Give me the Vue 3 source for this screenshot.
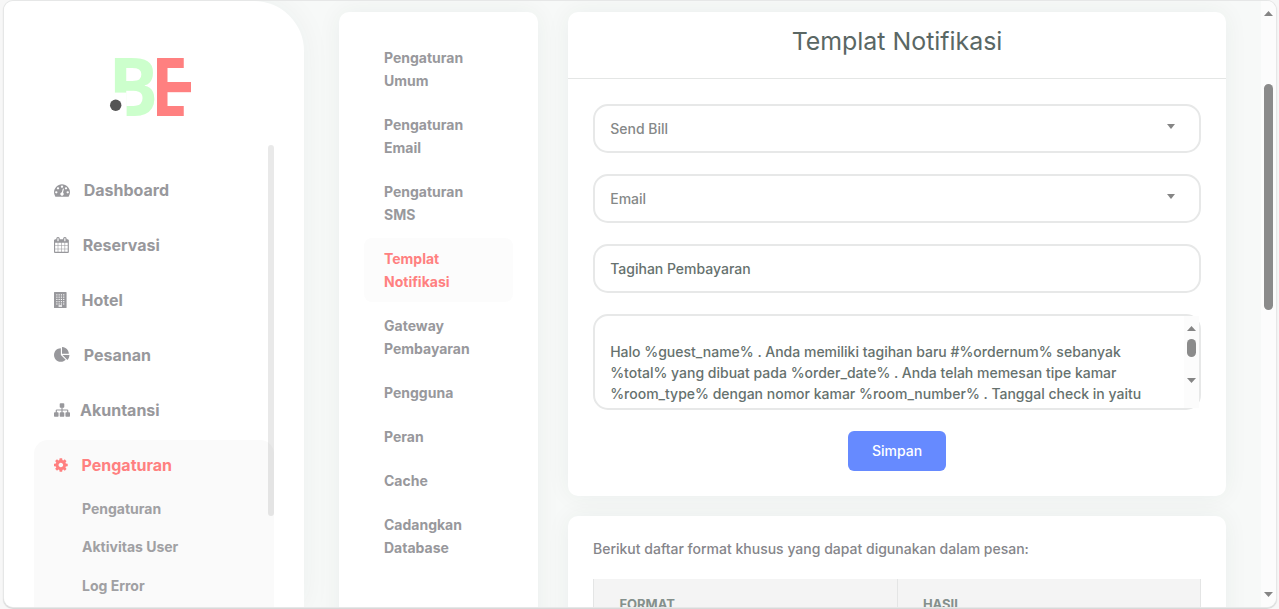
<script setup>
const building = []
for (let r = 0; r < 5; r++) {
  for (let c = 0; c < 4; c++) {
    building.push({ x: 256 + c * 256, y: 256 + r * 256 })
  }
}

const paths = {
  tachometer:
    'M384 1152q0-53-37.5-90.5t-90.5-37.5-90.5 37.5-37.5 90.5 37.5 90.5 90.5 37.5 90.5-37.5 37.5-90.5zm192-448q0-53-37.5-90.5t-90.5-37.5-90.5 37.5-37.5 90.5 37.5 90.5 90.5 37.5 90.5-37.5 37.5-90.5zm428 481l101-382q6-26-7.5-48.5t-38.5-29.5-48 6.5-30 39.5l-101 382q-60 5-107 43.5t-63 98.5q-20 77 20 146t117 89 146-20 89-117q16-60-6-117t-72-91zm660-33q0-53-37.5-90.5t-90.5-37.5-90.5 37.5-37.5 90.5 37.5 90.5 90.5 37.5 90.5-37.5 37.5-90.5zm-640-640q0-53-37.5-90.5t-90.5-37.5-90.5 37.5-37.5 90.5 37.5 90.5 90.5 37.5 90.5-37.5 37.5-90.5zm448 192q0-53-37.5-90.5t-90.5-37.5-90.5 37.5-37.5 90.5 37.5 90.5 90.5 37.5 90.5-37.5 37.5-90.5zm320 448q0 261-141 483-19 29-54 29h-1402q-35 0-54-29-141-221-141-483 0-182 71-348t191-286 286-191 348-71 348 71 286 191 191 286 71 348z',
  calendar:
    'M128 1664h288v-288h-288v288zm352 0h320v-288h-320v288zm-352-352h288v-320h-288v320zm352 0h320v-320h-320v320zm-352-384h288v-288h-288v288zm736 736h320v-288h-320v288zm-384-736h320v-288h-320v288zm768 736h288v-288h-288v288zm-384-352h320v-320h-320v320zm-352-864v-288q0-13-9.500-22.500t-22.500-9.500h-64q-13 0-22.500 9.500t-9.500 22.500v288q0 13 9.500 22.500t22.500 9.500h64q13 0 22.500-9.500t9.500-22.500zm736 864h288v-320h-288v320zm-384-384h320v-288h-320v288zm384 0h288v-288h-288v288zm32-480v-288q0-13-9.500-22.500t-22.500-9.500h-64q-13 0-22.500 9.500t-9.500 22.500v288q0 13 9.500 22.500t22.500 9.500h64q13 0 22.500-9.500t9.500-22.500zm384-64v1280q0 52-38 90t-90 38h-1408q-52 0-90-38t-38-90v-1280q0-52 38-90t90-38h128v-96q0-66 47-113t113-47h64q66 0 113 47t47 113v96h384v-96q0-66 47-113t113-47h64q66 0 113 47t47 113v96h128q52 0 90 38t38 90z',
  pie:
    'M768 890l546 546q-106 108-247.500 168t-298.500 60q-209 0-385.500-103t-279.500-279.500-103-385.500 103-385.500 279.500-279.500 385.500-103v762zm187 6h773q0 157-60 298.500t-168 247.500zm709-128h-768v-768q209 0 385.500 103t279.500 279.500 103 385.500z',
  sitemap:
    'M1792 1248v320q0 40-28 68t-68 28h-320q-40 0-68-28t-28-68v-320q0-40 28-68t68-28h96v-192h-512v192h96q40 0 68 28t28 68v320q0 40-28 68t-68 28h-320q-40 0-68-28t-28-68v-320q0-40 28-68t68-28h96v-192h-512v192h96q40 0 68 28t28 68v320q0 40-28 68t-68 28h-320q-40 0-68-28t-28-68v-320q0-40 28-68t68-28h96v-192q0-52 38-90t90-38h512v-192h-96q-40 0-68-28t-28-68v-320q0-40 28-68t68-28h320q40 0 68 28t28 68v320q0 40-28 68t-68 28h-96v192h512q52 0 90 38t38 90v192h96q40 0 68 28t28 68z',
  cog:
    'M1024 896q0-106-75-181t-181-75-181 75-75 181 75 181 181 75 181-75 75-181zm512-109v222q0 12-8 23t-20 13l-185 28q-19 54-39 91 35 50 107 138 10 12 10 25t-9 23q-27 37-99 108t-94 71q-12 0-26-9l-138-108q-44 23-91 38-16 136-29 186-7 28-36 28h-222q-14 0-24.500-8.500t-11.500-21.500l-28-184q-49-16-90-37l-141 107q-10 9-25 9-14 0-25-11-126-114-165-168-7-10-7-23 0-12 8-23 15-21 51-66.500t54-70.500q-27-50-41-99l-183-27q-13-2-21-12.500t-8-23.500v-222q0-12 8-23t19-13l186-28q14-46 39-92-40-57-107-138-10-12-10-24 0-10 9-23 26-36 98.500-107.500t94.500-71.500q13 0 26 10l138 107q44-23 91-38 16-136 29-186 7-28 36-28h222q14 0 24.500 8.500t11.500 21.500l28 184q49 16 90 37l142-107q9-9 24-9 13 0 25 10 129 119 165 170 7 8 7 22 0 12-8 23-15 21-51 66.500t-54 70.500q26 50 41 98l183 28q13 2 21 12.500t8 23.500z',
}

const menu = [
  { label: 'Dashboard', icon: 'tachometer' },
  { label: 'Reservasi', icon: 'calendar' },
  { label: 'Hotel', icon: 'building' },
  { label: 'Pesanan', icon: 'pie' },
  { label: 'Akuntansi', icon: 'sitemap' },
]
const submenu = ['Pengaturan', 'Aktivitas User', 'Log Error']
const tabs = [
  ['Pengaturan', 'Umum'],
  ['Pengaturan', 'Email'],
  ['Pengaturan', 'SMS'],
  ['Templat', 'Notifikasi'],
  ['Gateway', 'Pembayaran'],
  ['Pengguna'],
  ['Peran'],
  ['Cache'],
  ['Cadangkan', 'Database'],
]
const message = [
  'Halo %guest_name% . Anda memiliki tagihan baru #%ordernum% sebanyak',
  '%total% yang dibuat pada %order_date% . Anda telah memesan tipe kamar',
  '%room_type% dengan nomor kamar %room_number% . Tanggal check in yaitu',
]
</script>

<template>
  <div class="desk">
    <div class="window">
      <aside class="sidebar">
        <svg class="logo" width="90" height="70" viewBox="0 0 90 70">
          <text class="glyph green" transform="translate(2.300 62) scale(.93 1)">B</text>
          <rect x="8" y="38.600" width="12.600" height="26" fill="#fff" />
          <text class="glyph red" transform="translate(45.300 62) scale(.81 1)">E</text>
          <rect x="61" y="15.300" width="20" height="36" fill="#fff" />
          <rect x="51" y="5.100" width="10.500" height="56.900" fill="#ff8080" />
          <rect x="61" y="28" width="24" height="10.200" fill="#ff8080" />
          <circle cx="9.700" cy="51.300" r="5.700" fill="#555" />
        </svg>
        <div class="side-body">
          <nav class="menu">
            <a v-for="m in menu" :key="m.label" class="item" :class="m.icon">
              <svg class="ico" viewBox="0 0 1792 1792">
                <template v-if="m.icon === 'building'">
                  <path fill-rule="evenodd" d="M64 0H1344q64 0 64 64V1728q0 64-64 64H64q-64 0-64-64V64Q0 0 64 0zM512 1472V1664H896V1472z" />
                  <rect v-for="(b, i) in building" :key="i" :x="b.x" :y="b.y" width="128" height="128" fill="#fff" />
                </template>
                <path v-else :d="paths[m.icon]" />
              </svg>
              <span>{{ m.label }}</span>
            </a>
            <div class="group">
              <a class="item cog on">
                <svg class="ico" viewBox="0 0 1792 1792"><path :d="paths.cog" /></svg>
                <span>Pengaturan</span>
              </a>
              <a v-for="s in submenu" :key="s" class="sub">{{ s }}</a>
            </div>
          </nav>
          <i class="thin-bar"></i>
        </div>
      </aside>

      <main class="content">
        <section class="card tabs">
          <a v-for="(t, i) in tabs" :key="i" class="tab" :class="{ on: i === 3 }">
            <span v-for="w in t" :key="w">{{ w }}</span>
          </a>
        </section>

        <div class="column">
          <section class="card form">
            <h1>Templat Notifikasi</h1>
            <div class="fields">
              <div class="field select">
                <span>Send Bill</span>
                <svg width="8" height="5" viewBox="0 0 8 5"><path d="M0 0H8L4 5z" /></svg>
              </div>
              <div class="field select">
                <span>Email</span>
                <svg width="8" height="5" viewBox="0 0 8 5"><path d="M0 0H8L4 5z" /></svg>
              </div>
              <div class="field"><span>Tagihan Pembayaran</span></div>
              <div class="area">
                <div class="text"><p v-for="l in message" :key="l">{{ l }}</p></div>
                <div class="area-bar">
                  <svg width="9" height="5" viewBox="0 0 9 5"><path d="M4.500 0L9 5H0z" /></svg>
                  <i></i>
                  <svg width="9" height="5" viewBox="0 0 9 5"><path d="M0 0H9L4.500 5z" /></svg>
                </div>
              </div>
              <button>Simpan</button>
            </div>
          </section>
          <section class="card formats">
            <p>Berikut daftar format khusus yang dapat digunakan dalam pesan:</p>
            <div class="table"><b>FORMAT</b><b>HASIL</b></div>
          </section>
        </div>
      </main>

      <div class="page-bar">
        <svg width="9" height="5" viewBox="0 0 9 5"><path d="M4.500 0L9 5H0z" /></svg>
        <i></i>
        <svg width="9" height="5" viewBox="0 0 9 5"><path d="M0 0H9L4.500 5z" /></svg>
      </div>
    </div>
  </div>
</template>

<style>
body { margin: 0; overflow: hidden; }
</style>

<style scoped>
* { box-sizing: border-box; }
.desk {
  height: 609px;
  padding: 1px 3px 2px 4px;
  background: #f7f7f7;
  font-family: Inter, "Liberation Sans", sans-serif;
  font-size: 14px;
  overflow: hidden;
}
.window {
  display: flex;
  width: 1272px;
  height: 606px;
  border-radius: 9px;
  overflow: hidden;
  background: #f7f9f8;
  box-shadow: 0 0 0 1px #e6e7e7, 0 1px 1px 1px #d4d5d5;
}
.sidebar {
  flex: none;
  width: 300px;
  padding: 53px 30px 0;
  background: #fff;
  border-radius: 0 50px 0 0;
  box-shadow: 0 0 30px rgba(40, 60, 50, .05);
}
.logo { display: block; margin-left: 72px; overflow: visible; }
.glyph { font: 700 80px "Open Sans", sans-serif; }
.green { fill: #ccffcc; }
.red { fill: #ff8080; }
.side-body { display: flex; margin-top: 21px; }
.menu { flex: none; width: 240px; padding-top: 20px; }
.item {
  display: flex;
  align-items: center;
  height: 50px;
  margin-bottom: 5px;
  padding-left: 20px;
  color: #98989c;
  font-size: 16px;
  font-weight: 650;
}
.ico { flex: none; width: 16px; height: 16px; fill: currentColor; overflow: visible; }
.tachometer span, .pie span { margin-left: 13.700px; }
.calendar span { margin-left: 12.700px; }
.building span { margin-left: 11.500px; }
.sitemap span { margin-left: 10px; }
.cog span { margin-left: 11.500px; }
.on { color: #ff8080; }
.group { height: 200px; border-radius: 14px; background: #fafafa; }
.group .item { margin-bottom: 0; }
.sub {
  display: block;
  height: 38.300px;
  padding-left: 48px;
  line-height: 38px;
  color: #a0a0a3;
  font-weight: 650;
}
.thin-bar {
  flex: none;
  width: 6px;
  height: 371px;
  margin-left: -6px;
  border-radius: 3px;
  background: rgba(0, 0, 0, .085);
}
.content { display: flex; flex: 1; gap: 30px; padding: 11px 35px 0; min-width: 0; }
.card {
  background: #fff;
  border-radius: 10px;
  box-shadow: 0 0 25px rgba(40, 60, 50, .06);
}
.tabs { flex: none; width: 199px; height: 640px; padding: 25px 25px 0; }
.tab {
  display: block;
  margin-bottom: 3px;
  padding: 9px 20px;
  border-radius: 8px;
  color: #98989c;
  font-weight: 650;
  line-height: 23px;
}
.tab span { display: block; }
.tab.on { color: #ff8080; background: #fcfcfc; }
.column { flex: none; width: 658px; }
.form { height: 484px; margin-bottom: 20px; }
h1 {
  height: 67px;
  margin: 0;
  border-bottom: 1px solid #e4e6e5;
  text-align: center;
  color: #5a6764;
  font-size: 24.900px;
  font-weight: 420;
  line-height: 58px;
}
.fields { display: flex; flex-direction: column; padding: 25px 25px 0; }
.field {
  display: flex;
  align-items: center;
  justify-content: space-between;
  height: 49px;
  margin-bottom: 21px;
  padding: 0 24px 0 15.200px;
  border: 2px solid #e7e8e8;
  border-radius: 15px;
  color: #66716e;
  font-weight: 500;
}
.select { color: #858888; }
.select svg { margin-bottom: 4px; fill: #858585; }
.area {
  display: flex;
  height: 96px;
  margin-bottom: 21px;
  border: 2px solid #e7e8e8;
  border-radius: 15px;
  color: #66716e;
  font-weight: 500;
}
.text { flex: 1; padding: 25px 0 0 15.200px; overflow: hidden; }
.text p { margin: 0; line-height: 21px; white-space: nowrap; }
.area-bar {
  display: flex;
  flex-direction: column;
  align-items: center;
  width: 15px;
  padding-top: 10px;
  background: #fcfcfc;
}
.area-bar i { width: 9px; height: 18px; margin: 8px 0 21px; border-radius: 5px; background: #8b8b8b; }
.area-bar svg, .page-bar svg { display: block; flex: none; fill: #858585; }
button {
  align-self: center;
  width: 98px;
  height: 40px;
  padding: 0 0 2px;
  border: 0;
  border-radius: 6px;
  background: #668aff;
  color: #fff;
  font: 500 14px Inter, sans-serif;
}
.formats { height: 200px; padding: 21px 25px 0; color: #85858a; }
.formats p { margin: 0 0 19px; line-height: 23px; font-weight: 500; }
.table { display: grid; grid-template-columns: 1fr 1fr; height: 100px; border-right: 1px solid #e4e5e5; background: #f4f4f4; }
.table b {
  padding: 14px 25.400px;
  border-left: 1px solid #e4e5e5;
  color: #84908c;
  font-size: 13px;
  font-weight: 700;
  line-height: 23px;
}
.page-bar {
  display: flex;
  flex: none;
  flex-direction: column;
  align-items: center;
  width: 15px;
  padding-top: 10px;
  background: #fcfcfc;
}
.page-bar i { width: 9px; height: 226px; margin: 68px 0 282px; border-radius: 5px; background: #8b8b8b; }
</style>
